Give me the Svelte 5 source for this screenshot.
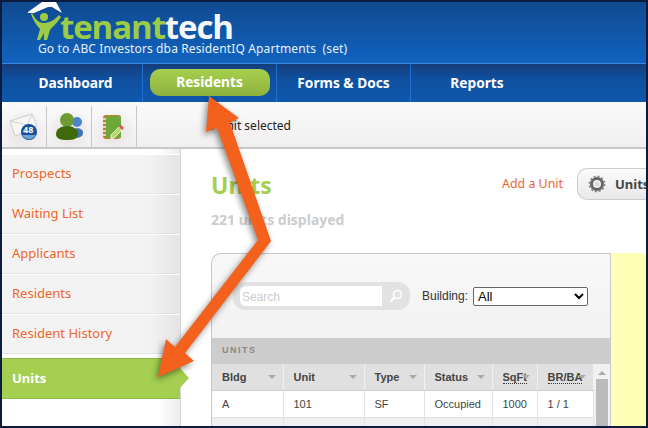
<script>
  const navItems = [
    { label: 'Dashboard', width: 141, first: true },
    { label: 'Residents', width: 134, active: true },
    { label: 'Forms & Docs', width: 134 },
    { label: 'Reports', width: 132, last: true }
  ];
  const sideItems = ['Prospects', 'Waiting List', 'Applicants', 'Residents', 'Resident History'];
  const columns = [
    { label: 'Bldg', width: 71 },
    { label: 'Unit', width: 81 },
    { label: 'Type', width: 60 },
    { label: 'Status', width: 68 },
    { label: 'SqFt', width: 45, abbr: true },
    { label: 'BR/BA', width: 56, abbr: true }
  ];
  const rows = [
    ['A', '101', 'SF', 'Occupied', '1000', '1 / 1'],
    ['', '', '', '', '', '']
  ];
</script>

<div class="frame">
  <header class="top">
    <div class="logo">
      <svg class="mark" width="36" height="40" viewBox="0 0 36 40">
        <path d="M0 10 L14 0 L28 0 L34 11 L24 5 L20 5 L6 11 L0 11 Z" fill="#fff" />
        <circle cx="16" cy="15" r="4" fill="#9ccb45" />
        <path d="M4 11 C8 19 12 21 16 21 C20 21 26 19 31 13 L33 15 C28 23 23 26 22 28 L19 38 L16 38 L16 31 L12 38 L9 38 L12 27 C9 24 5 18 3 12 Z" fill="#9ccb45" />
      </svg>
      <span class="word"><span class="green">tenant</span><span class="white">tech</span></span>
    </div>
    <div class="goto">Go to ABC Investors dba ResidentIQ Apartments&nbsp; (set)</div>
  </header>

  <nav class="nav">
    {#each navItems as item}
      <div class="nav-item" class:first={item.first} class:last={item.last} style="width: {item.width}px">
        <span class:pill={item.active}>{item.label}</span>
      </div>
    {/each}
  </nav>

  <div class="toolbar">
    <div class="tool">
      <svg width="42" height="36" viewBox="0 0 42 36">
        <path d="M7 12 L29 5 L34 17 L12 27 Z" fill="#f6f6f6" stroke="#cfcfcf" />
        <path d="M7 12 L24 16 L29 5" fill="none" stroke="#d6d6d6" />
        <circle cx="26" cy="23" r="8" fill="#14509c" />
        <path d="M19 26 A8 8 0 0 0 33 26 Z" fill="#6ea3d4" />
      </svg>
      <span class="badge">48</span>
    </div>
    <div class="tool">
      <svg width="42" height="36" viewBox="0 0 42 36">
        <circle cx="29" cy="13" r="5" fill="#4b86cc" />
        <path d="M22 26 C22 18 35 17 35 24 C35 29 27 30 22 28 Z" fill="#3d74bb" />
        <circle cx="19" cy="11" r="7" fill="#6f9a34" />
        <path d="M8 25 C8 20 13 17 19 17 C25 17 30 20 30 25 C30 30 25 31 19 31 C13 31 8 30 8 25 Z" fill="#3f6a0a" />
      </svg>
    </div>
    <div class="tool">
      <svg width="42" height="36" viewBox="0 0 42 36">
        <rect x="10" y="6" width="18" height="24" rx="3" fill="#c17f2b" />
        <rect x="13" y="7" width="15" height="22" rx="2" fill="#6fa83a" />
        <path d="M9 10h4M9 14h4M9 18h4M9 22h4M9 26h4" stroke="#eee" stroke-width="1.3" />
        <path d="M18 26 L26 18 L29 21 L21 29 L18 30 Z" fill="#b5da6a" stroke="#fff" stroke-width=".8" />
        <path d="M26 18 L28 16 L31 19 L29 21 Z" fill="#d9534f" />
      </svg>
    </div>
    <div class="selected">1 unit selected</div>
  </div>

  <div class="body">
    <aside class="side">
      {#each sideItems as item}
        <div class="side-item">{item}</div>
      {/each}
      <div class="side-item current">Units</div>
    </aside>

    <main class="content">
      <div class="head">
        <div>
          <h1>Units</h1>
          <p class="count">221 units displayed</p>
        </div>
        <div class="actions">
          <span class="add">Add a Unit</span>
          <div class="menu-btn">
            <svg width="18" height="18" viewBox="0 0 18 18">
              <circle cx="9" cy="9" r="5.5" fill="none" stroke="#666" stroke-width="3" />
              <circle cx="9" cy="9" r="7.4" fill="none" stroke="#888" stroke-width="2" stroke-dasharray="2 1.9" />
              <circle cx="9" cy="9" r="2.5" fill="#ddd" />
            </svg>
            <span>Units</span>
          </div>
        </div>
      </div>

      <div class="panel-row">
        <section class="panel">
          <div class="filters">
            <div class="search">
              <input type="text" placeholder="Search" />
              <svg width="14" height="14" viewBox="0 0 14 14">
                <circle cx="8.5" cy="5.5" r="4" fill="none" stroke="#fff" stroke-width="1.6" />
                <path d="M5.5 8.5 L1.5 12.5" stroke="#fff" stroke-width="2.2" />
              </svg>
            </div>
            <label class="building">
              Building:
              <select><option>All</option></select>
            </label>
          </div>
          <div class="units-bar">UNITS</div>
          <div class="table-wrap">
            <table>
              <thead>
                <tr>
                  {#each columns as col}
                    <th style="width: {col.width}px">
                      <span class:abbr={col.abbr}>{col.label}</span><i class="sort"></i>
                    </th>
                  {/each}
                </tr>
              </thead>
              <tbody>
                {#each rows as row}
                  <tr>
                    {#each row as cell}
                      <td>{cell}</td>
                    {/each}
                  </tr>
                {/each}
              </tbody>
            </table>
            <div class="scroll">
              <i class="up"></i>
              <div class="thumb"></div>
            </div>
          </div>
        </section>
        <div class="note"></div>
      </div>
    </main>
  </div>

  <!-- annotation arrow drawn over the screenshot -->
  <svg class="arrow" width="648" height="428" viewBox="0 0 648 428">
    <polygon
      points="209,96 239,118 230,123 271,241 185,353 194,361 158,377 166,339 175,347 258,240 217,128 206,132"
      fill="#f4611c"
    />
  </svg>
</div>

<style>
  :global(body) {
    margin: 0;
    background: #0a1a3a;
  }

  .frame {
    position: relative;
    width: 648px;
    height: 428px;
    box-sizing: border-box;
    border: 2px solid #0b1c3f;
    background: #fff;
    overflow: hidden;
    font-family: "Noto Sans", "Open Sans", sans-serif;
  }

  .top {
    height: 62px;
    box-sizing: border-box;
    background: linear-gradient(#104a90, #1063bf);
    border-bottom: 1px solid #3f86d8;
    padding-left: 26px;
    overflow: hidden;
  }

  .logo {
    display: flex;
    align-items: flex-end;
    height: 40px;
  }

  .mark {
    flex: none;
    margin-right: -4px;
  }

  .word {
    font-family: "Open Sans", sans-serif;
    font-size: 33px;
    font-weight: 700;
    letter-spacing: -1.1px;
    line-height: 36px;
    margin-bottom: -3px;
  }

  .green {
    color: #9ccb45;
  }

  .white {
    color: #f4f7fb;
  }

  .goto {
    margin: -1px 0 0 10px;
    font-size: 12px;
    line-height: 16px;
    letter-spacing: 0.13px;
    color: #e8f0fa;
    white-space: nowrap;
  }

  .nav {
    display: flex;
    height: 38px;
    background: linear-gradient(#153d7a, #0f50a0 40%, #0f58ac);
  }

  .nav-item {
    display: flex;
    align-items: center;
    justify-content: center;
    box-sizing: border-box;
    border-right: 1px solid #1f6fd0;
    color: #fff;
    font-size: 13.7px;
    font-weight: 700;
    padding-bottom: 1px;
  }

  .nav-item.first {
    padding-left: 7px;
  }

  .nav-item.last {
    border-right: 0;
  }

  .pill {
    display: block;
    width: 120px;
    height: 27px;
    line-height: 26px;
    text-align: center;
    border-radius: 10px;
    background: linear-gradient(#a6d04e, #8fb13e);
  }

  .toolbar {
    display: flex;
    align-items: stretch;
    height: 47px;
    box-sizing: border-box;
    background: linear-gradient(#fbfafa, #f1efef);
    border-bottom: 2px solid #c9c9c9;
    border-radius: 10px 0 0 0;
  }

  .tool {
    position: relative;
    display: flex;
    align-items: center;
    justify-content: center;
    width: 45px;
    box-sizing: border-box;
    border-right: 1px solid #c8c8c8;
    margin-top: 4px;
    background: radial-gradient(circle at 50% 60%, #e2e0e0, transparent 65%);
  }

  .badge {
    position: absolute;
    left: 21px;
    top: 18px;
    font-size: 9px;
    line-height: 11px;
    font-weight: 700;
    color: #fff;
  }

  .selected {
    padding: 15px 0 0 72px;
    font-size: 12px;
    color: #222;
  }

  .body {
    display: flex;
    height: 277px;
  }

  .side {
    flex: none;
    width: 179px;
    box-sizing: border-box;
    border-right: 1px solid #d6d6d6;
    background: linear-gradient(to right, #fff 88%, #ececec);
    padding-top: 5px;
  }

  .side-item {
    height: 40px;
    box-sizing: border-box;
    padding: 9px 0 0 10px;
    font-size: 13px;
    color: #f0662a;
    background: linear-gradient(to right, #f3f3f3 82%, #e4e4e4);
    border-top: 1px solid #fff;
    border-bottom: 1px solid #e2e2e2;
  }

  .side-item.current {
    position: relative;
    width: 178px;
    height: 41px;
    margin-top: 4px;
    padding-top: 10px;
    font-weight: 700;
    color: #fff;
    background: #a4cf50;
    border: 0;
    border-top: 1px solid #8fb944;
    border-bottom: 1px solid #8fb944;
  }

  .side-item.current::after {
    content: "";
    position: absolute;
    left: 178px;
    top: 9px;
    border-left: 9px solid #a4cf50;
    border-top: 10px solid transparent;
    border-bottom: 10px solid transparent;
  }

  .content {
    flex: 1;
    min-width: 0;
    padding: 19px 0 0 30px;
    background: #fff;
    overflow: hidden;
  }

  .head {
    display: flex;
    justify-content: space-between;
    height: 85px;
  }

  h1 {
    margin: 0;
    font-size: 23px;
    line-height: 34px;
    font-weight: 700;
    color: #a4cf50;
  }

  .count {
    margin: 8px 0 0;
    font-size: 14px;
    font-weight: 700;
    color: #ccc;
  }

  .actions {
    display: flex;
    align-items: flex-start;
    gap: 14px;
    margin-right: -21px;
  }

  .add {
    margin-top: 7px;
    font-size: 12.4px;
    color: #f0662a;
  }

  .menu-btn {
    display: flex;
    align-items: center;
    gap: 9px;
    width: 90px;
    height: 32px;
    box-sizing: border-box;
    padding-left: 10px;
    border: 1px solid #ccc;
    border-right: 0;
    border-radius: 10px 0 0 10px;
    background: linear-gradient(#fbfbfb, #e9e9e9);
    font-size: 13px;
    font-weight: 700;
    color: #444;
  }

  .panel-row {
    display: flex;
  }

  .panel {
    flex: none;
    width: 400px;
    box-sizing: border-box;
    border: 1px solid #c8c8c8;
    border-bottom: 0;
    border-radius: 10px 0 0 0;
    background: linear-gradient(#f8f8f8, #ebebeb);
  }

  .note {
    flex: 1;
    background: #ffffb8;
  }

  .filters {
    display: flex;
    align-items: center;
    gap: 12px;
    height: 84px;
    box-sizing: border-box;
    padding: 0 0 0 21px;
  }

  .search {
    display: flex;
    align-items: center;
    width: 177px;
    height: 28px;
    box-sizing: border-box;
    padding: 0 0 0 7px;
    background: #e2e2e2;
    border-radius: 12px;
  }

  .search input {
    width: 142px;
    height: 20px;
    box-sizing: border-box;
    border: 0;
    padding: 2px 2px 0;
    border-radius: 6px 0 0 6px;
    font-family: "Liberation Sans", sans-serif;
    font-size: 12px;
    background: #fff;
  }

  .search input::placeholder {
    color: #ccc;
  }

  .search svg {
    margin-left: 7px;
  }

  .building {
    display: flex;
    align-items: center;
    gap: 5px;
    font-family: "Liberation Sans", sans-serif;
    font-size: 12px;
    color: #333;
  }

  .building select {
    width: 115px;
    height: 19px;
    font-family: "Liberation Sans", sans-serif;
    font-size: 13px;
    background: #fff;
    border: 1px solid #666;
    border-radius: 2px;
    color: #000;
  }

  .units-bar {
    height: 26px;
    box-sizing: border-box;
    padding: 7px 0 0 10px;
    background: #cdcdcd;
    font-family: "Liberation Sans", sans-serif;
    font-size: 9px;
    font-weight: 700;
    letter-spacing: 1.5px;
    color: #888;
  }

  .table-wrap {
    display: flex;
    font-family: "Liberation Sans", sans-serif;
    font-size: 11px;
    color: #444;
  }

  table {
    width: 381px;
    border-collapse: collapse;
    table-layout: fixed;
  }

  th {
    position: relative;
    height: 26px;
    padding: 0 0 0 10px;
    box-sizing: border-box;
    background: #e0e0e0;
    border-right: 1px solid #f2f2f2;
    border-bottom: 1px solid #cfcfcf;
    text-align: left;
    font-weight: 700;
    color: #444;
  }

  .abbr {
    border-bottom: 1px dotted #333;
  }

  .sort {
    position: absolute;
    right: 7px;
    top: 11px;
    border-top: 4px solid #aaa;
    border-left: 4px solid transparent;
    border-right: 4px solid transparent;
  }

  td {
    height: 27px;
    padding: 0 0 0 10px;
    box-sizing: border-box;
    background: #fff;
    border-right: 1px solid #e2e2e2;
    border-bottom: 1px solid #e2e2e2;
  }

  tbody tr:nth-child(2) td {
    background: #f0f0f0;
  }

  .scroll {
    flex: 1;
    background: #f1f1f1;
    padding: 7px 2px 0;
  }

  .up {
    display: block;
    width: 0;
    margin: 0 auto 4px;
    border-bottom: 4px solid #aaa;
    border-left: 4px solid transparent;
    border-right: 4px solid transparent;
  }

  .thumb {
    height: 50px;
    background: #bbb;
  }

  .arrow {
    position: absolute;
    left: -2px;
    top: -2px;
    pointer-events: none;
    filter: drop-shadow(-2px 3px 3px rgba(0, 0, 0, 0.45));
  }
</style>
